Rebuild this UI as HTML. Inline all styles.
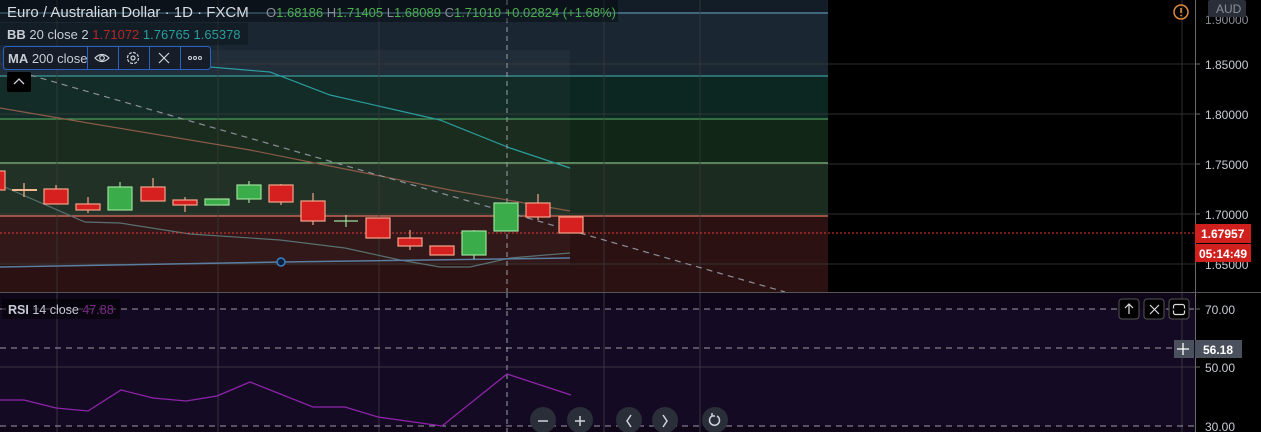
<!DOCTYPE html>
<html><head><meta charset="utf-8"><style>
body{margin:0;background:#000;width:1261px;height:432px;overflow:hidden;font-family:"Liberation Sans",sans-serif;}
svg{position:absolute;left:0;top:0}
text{font-family:"Liberation Sans",sans-serif}
</style></head><body>
<svg width="1261" height="432" viewBox="0 0 1261 432">
<rect width="1261" height="432" fill="#000"/>
<rect x="0" y="0" width="828" height="13" fill="#131d27"/>
<rect x="0" y="13" width="828" height="63" fill="#1a2733"/>
<rect x="0" y="76" width="828" height="43" fill="#0c2622"/>
<rect x="0" y="119" width="828" height="44" fill="#122617"/>
<rect x="0" y="163" width="828" height="53" fill="#1b2b1f"/>
<rect x="0" y="216" width="828" height="76" fill="#2c1112"/>
<rect x="0" y="50" width="570" height="215" fill="#ffffff" opacity="0.03"/>
<line x1="0" y1="13" x2="828" y2="13" stroke="#5b8fae" stroke-width="1.2"/>
<line x1="0" y1="76" x2="828" y2="76" stroke="#3a9a9a" stroke-width="1.2"/>
<line x1="0" y1="119" x2="828" y2="119" stroke="#4e9a5a" stroke-width="1.2"/>
<line x1="0" y1="163" x2="828" y2="163" stroke="#7ec27e" stroke-width="1.2"/>
<line x1="0" y1="216" x2="828" y2="216" stroke="#e0735c" stroke-width="1.2"/>
<g stroke="#3a3a3a" stroke-width="1" opacity="0.8">
<line x1="0" y1="64" x2="1195" y2="64"/><line x1="0" y1="114" x2="1195" y2="114"/>
<line x1="0" y1="164" x2="1195" y2="164"/><line x1="0" y1="214" x2="1195" y2="214"/>
<line x1="0" y1="264" x2="1195" y2="264"/>
<line x1="57" y1="0" x2="57" y2="432"/><line x1="218" y1="0" x2="218" y2="432"/>
<line x1="379" y1="0" x2="379" y2="432"/><line x1="604" y1="0" x2="604" y2="432"/>
<line x1="700" y1="0" x2="700" y2="432"/><line x1="1182" y1="0" x2="1182" y2="432"/>
</g>
<polyline points="60,55 150,62 270,72 330,95 440,120 510,148 570,168" fill="none" stroke="#2a9d9d" stroke-width="1.2"/>
<polyline points="0,108 100,125 250,150 350,170 450,190 570,211" fill="none" stroke="#8a5a48" stroke-width="1.2"/>
<polyline points="0,185 85,222 120,223 190,234 280,240 345,248 400,260 440,267 470,267 510,258 570,253" fill="none" stroke="#5a7070" stroke-width="1.2"/>
<polyline points="0,267 281,262 570,258" fill="none" stroke="#5a7ea0" stroke-width="1.5"/>
<circle cx="281" cy="262" r="4" fill="#0a2040" stroke="#3a80c0" stroke-width="1.5"/>
<line x1="30" y1="75" x2="785" y2="292" stroke="#8a8f98" stroke-width="1.2" stroke-dasharray="6,5"/>
<line x1="0" y1="233" x2="1195" y2="233" stroke="#e53935" stroke-width="1" stroke-dasharray="2,2"/>
<line x1="507" y1="0" x2="507" y2="432" stroke="#9aa0a6" stroke-width="1" stroke-dasharray="5,4"/>
<g stroke-width="1.2">
<g stroke="#f4a58a" fill="#d61f1f">
<rect x="-3" y="171" width="8" height="19"/>
<line x1="56" y1="185" x2="56" y2="189"/><rect x="44" y="189" width="24" height="15"/>
<line x1="88" y1="197" x2="88" y2="213"/><rect x="76" y="204" width="24" height="6"/>
<line x1="153" y1="178" x2="153" y2="187"/><rect x="141" y="187" width="24" height="14"/>
<line x1="185" y1="197" x2="185" y2="212"/><rect x="173" y="200" width="24" height="5"/>
<line x1="281" y1="184" x2="281" y2="205"/><rect x="269" y="185" width="24" height="17"/>
<line x1="313" y1="193" x2="313" y2="225"/><rect x="301" y="201" width="24" height="20"/>
<rect x="366" y="218" width="24" height="20"/>
<line x1="410" y1="230" x2="410" y2="250"/><rect x="398" y="238" width="24" height="8"/>
<rect x="430" y="246" width="24" height="9"/>
<line x1="538" y1="194" x2="538" y2="220"/><rect x="526" y="203" width="24" height="14"/>
<rect x="559" y="217" width="24" height="16"/>
</g>
<g stroke="#f4b890"><line x1="12" y1="190" x2="37" y2="190" stroke-width="2"/><line x1="24" y1="183" x2="24" y2="197"/></g>
<g stroke="#9be09b" fill="#3aad4a">
<line x1="120" y1="182" x2="120" y2="187"/><rect x="108" y="187" width="24" height="23"/>
<rect x="205" y="199" width="24" height="6"/>
<line x1="249" y1="181" x2="249" y2="203"/><rect x="237" y="185" width="24" height="14"/>
<line x1="474" y1="230" x2="474" y2="259"/><rect x="462" y="231" width="24" height="24"/>
<rect x="494" y="203" width="24" height="28"/>
</g>
<g stroke="#9be09b"><line x1="334" y1="221" x2="358" y2="221"/><line x1="346" y1="215" x2="346" y2="227"/></g>
</g>
<line x1="0" y1="292.5" x2="1261" y2="292.5" stroke="#555" stroke-width="1"/>
<rect x="0" y="293" width="1195" height="139" fill="#0f0719"/>
<rect x="0" y="309" width="1195" height="117" fill="#160b26" opacity="0.8"/>
<g stroke="#3a3342" stroke-width="1"><line x1="0" y1="367" x2="1195" y2="367"/>
<line x1="57" y1="293" x2="57" y2="432"/><line x1="218" y1="293" x2="218" y2="432"/><line x1="379" y1="293" x2="379" y2="432"/><line x1="604" y1="293" x2="604" y2="432"/><line x1="700" y1="293" x2="700" y2="432"/><line x1="1182" y1="293" x2="1182" y2="432"/></g>
<line x1="507" y1="293" x2="507" y2="432" stroke="#9aa0a6" stroke-dasharray="5,4"/>
<g stroke="#9a9aa6" stroke-dasharray="6,5" stroke-width="1"><line x1="0" y1="309" x2="1195" y2="309"/><line x1="0" y1="348" x2="1195" y2="348"/><line x1="0" y1="426" x2="1195" y2="426"/></g>
<polyline points="0,400 24,400 56,408 88,411 121,390 153,398 186,401 217,396 250,382 313,407 345,407 378,417 442,426 507,374 571,395" fill="none" stroke="#8e24aa" stroke-width="1.3"/>
<rect x="2" y="299" width="118" height="20" fill="#000" opacity="0.5"/>
<text x="8" y="314" font-size="12.5" fill="#c8ccd4"><tspan font-weight="bold">RSI</tspan> 14 close <tspan fill="#7b2a8a">47.88</tspan></text>
<line x1="1195.5" y1="0" x2="1195.5" y2="432" stroke="#6a6a6a"/>
<g fill="#c8ccd4" font-size="12">
<text x="1205" y="24" fill="#8a8e96">1.90000</text>
<text x="1205" y="69">1.85000</text><text x="1205" y="119">1.80000</text>
<text x="1205" y="169">1.75000</text><text x="1205" y="219">1.70000</text>
<text x="1205" y="269">1.65000</text>
<text x="1205" y="314">70.00</text><text x="1205" y="372">50.00</text><text x="1205" y="431">30.00</text>
</g>
<g stroke="#6a6a6a"><line x1="1195" y1="64" x2="1200" y2="64"/><line x1="1195" y1="114" x2="1200" y2="114"/><line x1="1195" y1="164" x2="1200" y2="164"/><line x1="1195" y1="214" x2="1200" y2="214"/><line x1="1195" y1="309" x2="1200" y2="309"/><line x1="1195" y1="367" x2="1200" y2="367"/></g>
<rect x="1208" y="0" width="38" height="17" rx="2" fill="#2a2e39"/>
<text x="1216" y="13" font-size="12" fill="#8a8e96">AUD</text>
<circle cx="1181" cy="12" r="7" fill="none" stroke="#e08a3a" stroke-width="1.5"/>
<line x1="1181" y1="8" x2="1181" y2="13" stroke="#e08a3a" stroke-width="1.6"/><circle cx="1181" cy="15.5" r="0.9" fill="#e08a3a"/>
<rect x="1195" y="224" width="56" height="19" fill="#d0201e"/>
<text x="1201" y="238" font-size="12" font-weight="bold" fill="#fff">1.67957</text>
<rect x="1195" y="244" width="56" height="18" fill="#d0201e"/>
<text x="1199" y="258" font-size="12" font-weight="bold" fill="#fff">05:14:49</text>
<rect x="1195" y="340" width="47" height="18" fill="#4a505c"/>
<text x="1203" y="354" font-size="12" font-weight="bold" fill="#fff">56.18</text>
<rect x="1174" y="340" width="20" height="18" fill="#4a505c"/>
<path d="M1177 349h12M1183 343v12" stroke="#fff" stroke-width="1.3"/>
<g fill="#000" stroke="#555" stroke-width="1"><rect x="1119" y="299" width="20" height="20" rx="3"/><rect x="1144" y="299" width="20" height="20" rx="3"/><rect x="1169" y="299" width="20" height="20" rx="3"/></g>
<g stroke="#ddd" stroke-width="1.2" fill="none"><path d="M1129 314v-10M1125 308l4-4 4 4"/><path d="M1150 305l9 9M1159 305l-9 9"/><rect x="1173.5" y="304.5" width="11" height="10" rx="2"/><path d="M1173 309.5h12" stroke="#000" stroke-width="2"/></g>
<g fill="#2a2e39"><circle cx="543" cy="420" r="13"/><circle cx="580" cy="420" r="13"/><circle cx="629" cy="420" r="13"/><circle cx="665" cy="420" r="13"/><circle cx="715" cy="420" r="13"/></g>
<g stroke="#d1d4dc" stroke-width="1.5" fill="none"><path d="M538 421h10"/><path d="M575 421h10M580 416v10"/><path d="M631 415l-4 6 4 6"/><path d="M663 415l4 6-4 6"/><path d="M712 416a5 5 0 1 0 5 0M712 416v-3M712 416h3"/></g>
<rect x="0" y="0" width="618" height="22" fill="#000" opacity="0.35"/>
<text x="7" y="17" font-size="15" fill="#d8dbe2">Euro / Australian Dollar · 1D · FXCM</text>
<text x="266" y="17" font-size="13" fill="#8a8e96">O<tspan fill="#4caf50">1.68186</tspan> H<tspan fill="#4caf50">1.71405</tspan> L<tspan fill="#4caf50">1.68089</tspan> C<tspan fill="#4caf50">1.71010</tspan> <tspan fill="#4caf50">+0.02824 (+1.68%)</tspan></text>
<rect x="0" y="23" width="248" height="22" fill="#000" opacity="0.25"/>
<text x="7" y="39" font-size="13" fill="#c8ccd4"><tspan font-weight="bold">BB</tspan> 20 close 2 <tspan fill="#b02a2a">1.71072</tspan> <tspan fill="#2a9d9d">1.76765</tspan> <tspan fill="#2a9d9d">1.65378</tspan></text>
<rect x="3.5" y="46.5" width="207" height="23" rx="3" fill="#161d28" stroke="#2962c0"/>
<g stroke="#2962c0"><line x1="87.5" y1="47" x2="87.5" y2="69"/><line x1="118.5" y1="47" x2="118.5" y2="69"/><line x1="149.5" y1="47" x2="149.5" y2="69"/><line x1="180.5" y1="47" x2="180.5" y2="69"/></g>
<text x="8" y="63" font-size="13" fill="#c8ccd4"><tspan font-weight="bold">MA</tspan> 200 close</text>
<g stroke="#d1d4dc" stroke-width="1.2" fill="none">
<path d="M95 58q7-7 14 0q-7 7-14 0z"/><circle cx="102" cy="58" r="2.3"/>
<circle cx="133" cy="58" r="5.5" stroke-dasharray="3,1.3"/><circle cx="133" cy="58" r="2"/>
<path d="M159 53l10 10M169 53l-10 10"/>
</g>
<g fill="none" stroke="#d1d4dc" stroke-width="1"><circle cx="190" cy="58" r="1.5"/><circle cx="195" cy="58" r="1.5"/><circle cx="200" cy="58" r="1.5"/></g>
<rect x="7" y="72" width="24" height="20" rx="2" fill="#000"/>
<path d="M14 84l5-5 5 5" stroke="#d1d4dc" stroke-width="1.3" fill="none"/>
</svg>
</body></html>
